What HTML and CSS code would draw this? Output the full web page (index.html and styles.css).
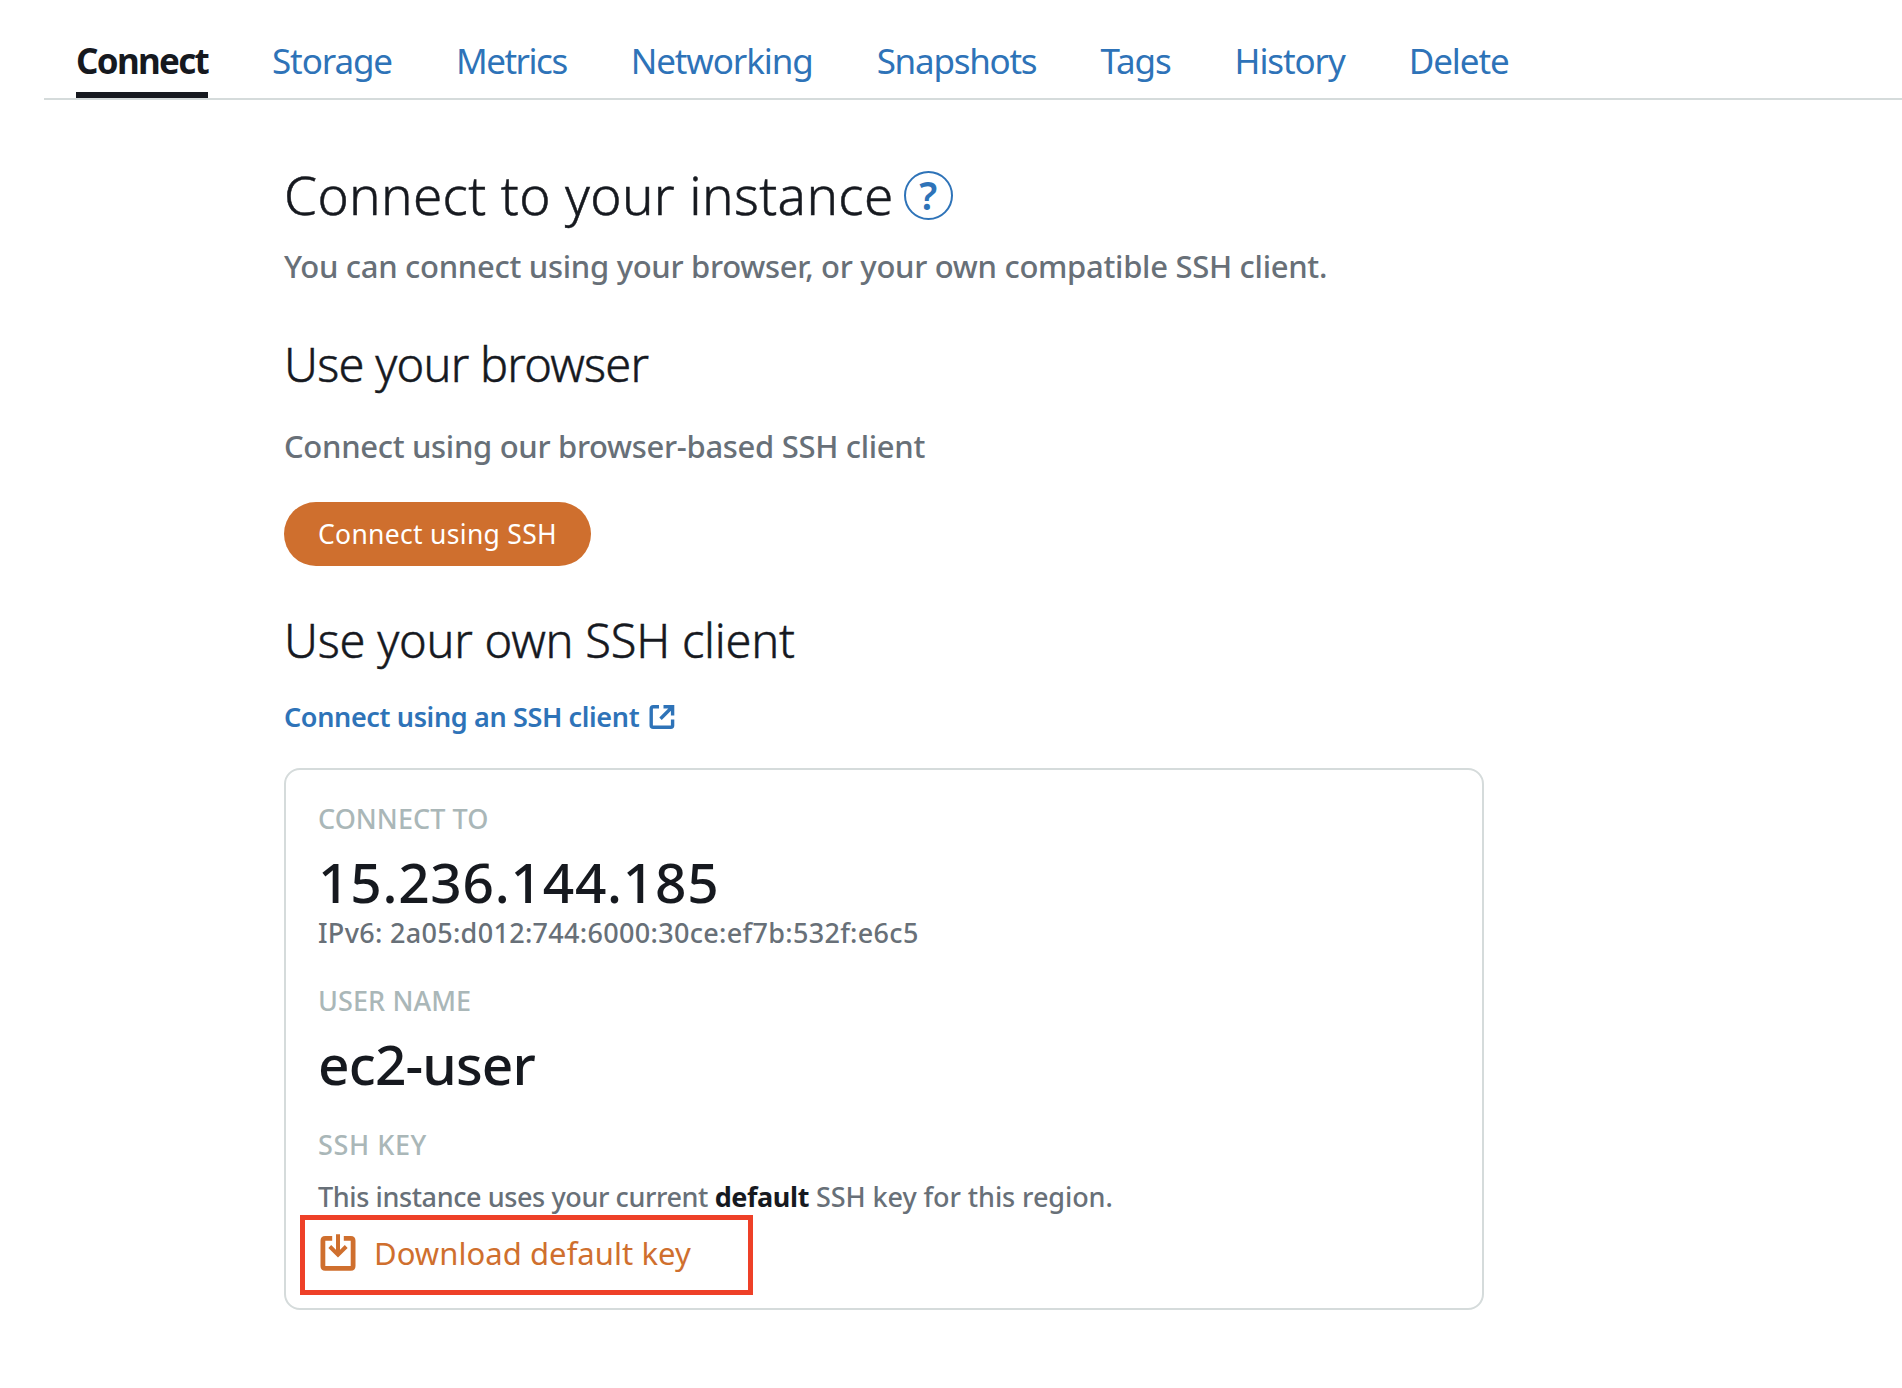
FILE: index.html
```html
<!DOCTYPE html>
<html lang="en">
<head>
<meta charset="utf-8">
<title>Connect</title>
<link rel="stylesheet" href="styles.css">
</head>
<body>
<nav class="tabs">
  <a class="tab tab-active">Connect</a>
  <a class="tab">Storage</a>
  <a class="tab tab-metrics">Metrics</a>
  <a class="tab">Networking</a>
  <a class="tab tab-snapshots">Snapshots</a>
  <a class="tab">Tags</a>
  <a class="tab">History</a>
  <a class="tab">Delete</a>
</nav>
<main class="content">
  <div class="title-row">
    <h1 class="title">Connect to your instance</h1>
    <span class="help">?</span>
  </div>
  <p class="lead lead-title">You can connect using your browser, or your own compatible SSH client.</p>
  <h2 class="heading">Use your browser</h2>
  <p class="lead lead-browser">Connect using our browser-based SSH client</p>
  <button class="button">Connect using SSH</button>
  <h2 class="heading heading-client">Use your own SSH client</h2>
  <a class="doc-link"><span>Connect using an SSH client</span>
    <svg class="external" viewBox="0 0 26 26" fill="none" stroke="currentColor" stroke-width="3.4">
      <path d="M10 2.7H4.2Q2.2 2.7 2.2 4.7V21.6Q2.2 23.3 4.2 23.3H21.8Q23.6 23.3 23.6 21.6V15.5M14.5 2.7H23.6V11.5M23 3.3L11.5 14.8"/>
    </svg>
  </a>
  <section class="card">
    <div class="label">CONNECT TO</div>
    <div class="value value-ip">15.236.144.185</div>
    <div class="ipv6">IPv6: 2a05:d012:744:6000:30ce:ef7b:532f:e6c5</div>
    <div class="label label-user">USER NAME</div>
    <div class="value value-user">ec2-user</div>
    <div class="label label-key">SSH KEY</div>
    <p class="key-note">This instance uses your current <strong>default</strong><span class="key-scope"> SSH key for this region.</span></p>
    <a class="download">
      <svg class="download-icon" viewBox="0 0 36 38" fill="none" stroke="currentColor" stroke-width="4.8">
        <path d="M12.2 4.4H5.2Q2.9 4.4 2.9 6.7V32.1Q2.9 34.4 5.2 34.4H30.8Q33.1 34.4 33.1 32.1V6.7Q33.1 4.4 30.8 4.4H23.8"/>
        <path stroke-width="4" d="M18 .3V20M9.8 12.5L18 20.6L26.2 12.5"/>
      </svg>
      <span>Download default key</span>
    </a>
  </section>
</main>
</body>
</html>
```
FILE: styles.css
```css
* { box-sizing: border-box; }
body {
  margin: 0;
  background: #fff;
  color: #16191f;
  font-family: "Noto Sans", sans-serif;
}
h1, h2, p { margin: 0; }

.tabs {
  display: flex;
  gap: 64px;
  height: 100px;
  margin-left: 44px;
  padding: 37px 0 0 32px;
  border-bottom: 2px solid #d5dbdb;
}
.tab {
  height: 61px;
  font-size: 35px;
  line-height: 48px;
  letter-spacing: -1.1px;
  color: #2e73b8;
}
.tab-active {
  width: 132px;
  border-bottom: 6px solid #16191f;
  color: #16191f;
  font-weight: 700;
  letter-spacing: -1.7px;
}
.tab-metrics { letter-spacing: -1.5px; }
.tab-snapshots { letter-spacing: -1.25px; }

.content { width: 1200px; margin-left: 284px; padding-top: 59px; }
.title-row { display: flex; align-items: center; gap: 10px; }
.title { font-size: 53px; line-height: 72px; font-weight: 300; letter-spacing: .38px; -webkit-text-stroke: .5px currentColor; }
.help {
  width: 49px;
  height: 49px;
  border: 2px solid #2e73b8;
  border-radius: 50%;
  color: #2e73b8;
  font-size: 39px;
  line-height: 44px;
  font-weight: 600;
  text-align: center;
}
.lead { font-size: 31px; line-height: 42px; font-weight: 500; color: #687078; }
.lead-title { margin-top: 14px; letter-spacing: -.29px; }
.heading { margin-top: 45px; font-size: 47px; line-height: 64px; font-weight: 300; letter-spacing: -.75px; -webkit-text-stroke: .5px currentColor; }
.lead-browser { margin-top: 29px; letter-spacing: -.31px; }
.button {
  display: block;
  width: 307px;
  height: 64px;
  margin-top: 35px;
  padding: 0;
  border: 0;
  border-radius: 32px;
  background: #cf6f2e;
  color: #fff;
  font: 400 26.5px/64px "Noto Sans", sans-serif;
  letter-spacing: .3px;
}
.heading-client { margin-top: 42px; letter-spacing: -.23px; }
.doc-link {
  display: flex;
  align-items: center;
  gap: 10px;
  margin-top: 27px;
  color: #2e73b8;
  font-size: 27px;
  line-height: 36px;
  font-weight: 600;
  letter-spacing: -.36px;
}
.external { width: 26px; height: 26px; }

.card {
  height: 542px;
  margin-top: 33px;
  padding: 31px 32px 0;
  border: 2px solid #d5dbdb;
  border-radius: 16px;
}
.label { font-size: 27px; line-height: 36px; font-weight: 500; letter-spacing: .05px; color: #aab7b8; }
.value { margin-top: 12px; font-size: 55px; line-height: 66px; font-weight: 500; }
.value-ip { letter-spacing: .75px; }
.ipv6 { font-size: 27px; line-height: 36px; letter-spacing: .31px; font-weight: 500; color: #687078; }
.label-user { margin-top: 32px; letter-spacing: .1px; }
.value-user { margin-top: 12px; letter-spacing: -.85px; }
.label-key { margin-top: 30px; letter-spacing: .6px; }
.key-note { margin-top: 16px; font-size: 27px; line-height: 36px; font-weight: 500; letter-spacing: -.4px; color: #687078; }
.key-note strong { font-weight: 700; color: #16191f; }
.key-scope { letter-spacing: -.08px; }
.download {
  display: flex;
  align-items: flex-start;
  gap: 18px;
  width: 453px;
  height: 80px;
  margin-left: -18px;
  padding: 12px 0 0 15px;
  border: 5px solid #ee4028;
  color: #cf6f2e;
  font-size: 31px;
  line-height: 42px;
  letter-spacing: .05px;
}
.download-icon { width: 36px; height: 38px; margin-top: 2px; }
```
